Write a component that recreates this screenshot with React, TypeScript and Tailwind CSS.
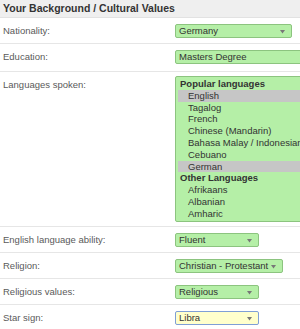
import React from "react";

const font = { fontFamily: '"Liberation Sans", Arial, sans-serif' };

function Arrow() {
  return (
    <svg width="5" height="4" viewBox="0 0 5 4" className="absolute right-[6px] top-[5px]">
      <path d="M0 0 L5 0 L2.5 3.5 Z" fill="#777" />
    </svg>
  );
}

function Select({
  value,
  width,
  arrow = true,
  focus = false,
}: {
  value: string;
  width: string;
  arrow?: boolean;
  focus?: boolean;
}) {
  return (
    <div
      className={`relative h-[14px] whitespace-nowrap rounded-[2px] border pl-[3px] text-[9.5px] leading-[12px] text-[#333] ${width} ${
        focus ? "bg-[#ffffcc] border-[#7f9fd6]" : "bg-[#b5efa7] border-[#8cc47f]"
      }`}
    >
      {value}
      {arrow && <Arrow />}
    </div>
  );
}

const popular = ["English", "Tagalog", "French", "Chinese (Mandarin)", "Bahasa Malay / Indonesian", "Cebuano", "German"];
const other = ["Afrikaans", "Albanian", "Amharic"];
const selected = ["English", "German"];

function Row({ label, children, pad = "pt-[6px] pb-[5px]" }: { label: string; children: React.ReactNode; pad?: string }) {
  return (
    <div className={`grid grid-cols-[175px_1fr] items-center border-b border-[#e6e6e6] ${pad}`}>
      <div className="pl-[3px] text-[9.5px] leading-[14px] text-[#5a5a5a]">{label}</div>
      {children}
    </div>
  );
}

export default function App() {
  return (
    <div className="w-[300px] h-[329px] overflow-hidden bg-white" style={font}>
      <div className="h-[18px] bg-[#efefef] border-b border-[#e2e2e2] pl-[3px] text-[10.5px] font-bold leading-[17px] text-[#333]">
        Your Background / Cultural Values
      </div>
      <Row label="Nationality:">
        <Select value="Germany" width="w-[117px]" />
      </Row>
      <Row label="Education:" pad="pt-[6px] pb-[7px]">
        <Select value="Masters Degree" width="w-[140px]" arrow={false} />
      </Row>
      <div className="grid grid-cols-[175px_1fr] items-start border-b border-[#e6e6e6] pt-[4px] pb-[4px]">
        <div className="pl-[3px] pt-[3px] text-[9.5px] leading-[12px] text-[#5a5a5a]">Languages spoken:</div>
        <div className="w-[140px] h-[146px] rounded-[2px] border border-[#8cc47f] bg-[#b5efa7] pt-[1px] pl-[2px] text-[9.5px] leading-[11.8px] text-[#333]">
          <div className="pl-[2px] font-bold">Popular languages</div>
          {popular.map((l) => (
            <div key={l} className={`pl-[10px] whitespace-nowrap ${selected.includes(l) ? "bg-[#c6c6c6]" : ""}`}>
              {l}
            </div>
          ))}
          <div className="pl-[2px] font-bold">Other Languages</div>
          {other.map((l) => (
            <div key={l} className="pl-[10px]">
              {l}
            </div>
          ))}
        </div>
      </div>
      <Row label="English language ability:">
        <Select value="Fluent" width="w-[84px]" />
      </Row>
      <Row label="Religion:">
        <Select value="Christian - Protestant" width="w-[108px]" />
      </Row>
      <Row label="Religious values:">
        <Select value="Religious" width="w-[84px]" />
      </Row>
      <Row label="Star sign:">
        <Select value="Libra" width="w-[84px]" focus />
      </Row>
    </div>
  );
}
